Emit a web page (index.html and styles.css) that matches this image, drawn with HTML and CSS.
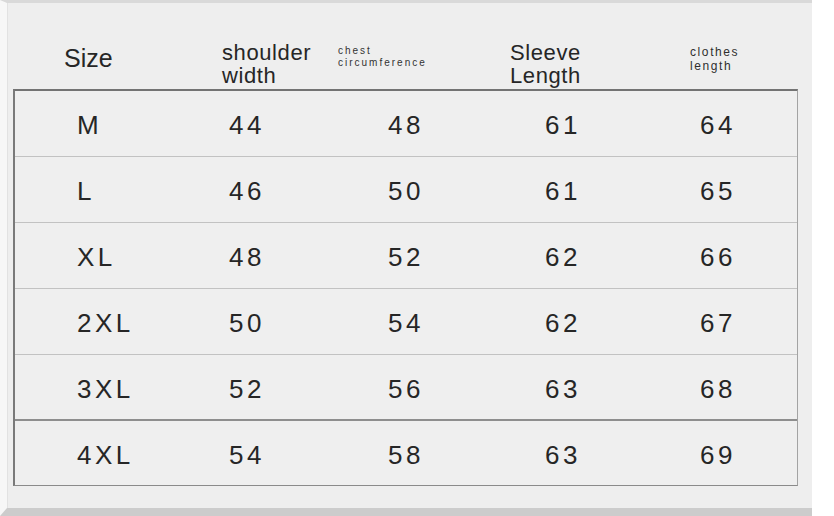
FILE: index.html
```html
<!DOCTYPE html>
<html lang="en">
<head>
<meta charset="utf-8">
<title>Size chart</title>
<link rel="stylesheet" href="styles.css">
</head>
<body>
<div class="frame">
  <div class="card">
    <div class="head">
      <div class="h h-size">Size</div>
      <div class="h h-shoulder">shoulder<br>width</div>
      <div class="h h-chest">chest<br>circumference</div>
      <div class="h h-sleeve">Sleeve<br>Length</div>
      <div class="h h-clothes">clothes<br>length</div>
    </div>
    <div class="table">
      <div class="row"><span>M</span><span>44</span><span>48</span><span>61</span><span>64</span></div>
      <div class="row"><span>L</span><span>46</span><span>50</span><span>61</span><span>65</span></div>
      <div class="row"><span>XL</span><span>48</span><span>52</span><span>62</span><span>66</span></div>
      <div class="row"><span>2XL</span><span>50</span><span>54</span><span>62</span><span>67</span></div>
      <div class="row"><span>3XL</span><span>52</span><span>56</span><span>63</span><span>68</span></div>
      <div class="row row-last"><span>4XL</span><span>54</span><span>58</span><span>63</span><span>69</span></div>
    </div>
  </div>
</div>
</body>
</html>
```

FILE: styles.css
```css
html, body {
  margin: 0;
  padding: 0;
  background: #ffffff;
}
body {
  width: 834px;
  height: 516px;
  overflow: hidden;
  font-family: "Liberation Sans", Arial, sans-serif;
  color: #262626;
}
.frame {
  box-sizing: border-box;
  width: 812px;
  height: 516px;
  border-top: 3px solid #d9d9d9;
  border-bottom: 8px solid #cccccc;
  border-left: 7px solid #f7f7f7;
  background: #eeeeee;
}
.card {
  box-sizing: border-box;
  height: 100%;
  padding-left: 5px;
  border-left: 1px solid #e2e2e2;
}
.head {
  display: grid;
  grid-template-columns: 152px 159px 157px 155px 1fr;
  padding-left: 64px;
  height: 86px;
  box-sizing: border-box;
  width: 785px;
}
.h {
  align-self: start;
  white-space: nowrap;
}
.h-size {
  font-size: 25px;
  line-height: 30px;
  margin-top: 40px;
  margin-left: -13px;
}
.h-shoulder, .h-sleeve {
  font-size: 22px;
  line-height: 23px;
  margin-top: 38px;
  letter-spacing: 0.6px;
}
.h-shoulder { margin-left: -7px; }
.h-sleeve { margin-left: -35px; }
.h-chest {
  font-size: 10px;
  line-height: 12px;
  letter-spacing: 2px;
  margin-top: 42px;
  margin-left: -50px;
  color: #333333;
}
.h-clothes {
  font-size: 12px;
  line-height: 14px;
  letter-spacing: 1.6px;
  margin-top: 42px;
  margin-left: -10px;
  color: #2e2e2e;
}
.table {
  box-sizing: border-box;
  width: 785px;
  border-top: 2px solid #737373;
  border-left: 2px solid #7a7a7a;
  border-right: 1px solid #a3a3a3;
  border-bottom: 1px solid #8a8a8a;
  background: #efefef;
}
.row {
  display: grid;
  grid-template-columns: 152px 159px 157px 155px 1fr;
  padding-left: 62px;
  height: 66px;
  box-sizing: border-box;
  border-bottom: 1px solid #c2c2c2;
  padding-top: 3px;
  font-size: 26px;
  line-height: 62px;
  letter-spacing: 3.5px;
}
.row:nth-child(5) {
  border-bottom: 2px solid #8e8e8e;
}
.row-last {
  border-bottom: none;
  height: 64px;
}
```
